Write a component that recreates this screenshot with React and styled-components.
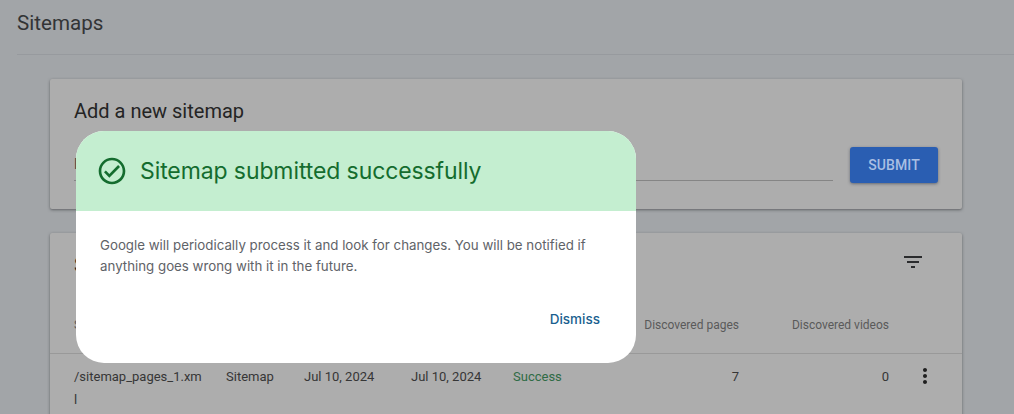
import React from 'react'
import styled, { createGlobalStyle } from 'styled-components'

const Global = createGlobalStyle`
  html, body {
    margin: 0;
    padding: 0;
    background: #a2a5a8;
  }
  * { box-sizing: border-box; }
`

const Page = styled.div`
  position: relative;
  width: 1014px;
  height: 414px;
  overflow: hidden;
  background: #a2a5a8;
  font-family: Roboto, "Liberation Sans", sans-serif;
  color: #2a2b2d;
`

const PageHeader = styled.header`
  height: 55px;
  margin-left: 17px;
  padding-top: 10px;
  border-bottom: 1px solid #979a9e;
  font-size: 20.6px;
  line-height: 26px;
  color: #323436;
`

const Content = styled.main`
  display: flex;
  flex-direction: column;
  gap: 24px;
  width: 912px;
  margin: 24px 0 0 50px;
`

const Card = styled.section`
  background: #adadad;
  border-radius: 2px;
  box-shadow: 0 1px 3px rgba(40, 42, 46, 0.55);
`

const AddCard = styled(Card)`
  height: 130px;
  padding: 20px 24px 0;
`

const CardTitle = styled.h2`
  margin: 0;
  font-size: 20px;
  font-weight: 400;
  line-height: 24px;
  color: #242424;
`

const FormRow = styled.div`
  display: flex;
  align-items: flex-start;
  gap: 17px;
  margin-top: 24px;
`

const FieldLine = styled.div`
  width: 759px;
  height: 34px;
  border-bottom: 1px solid #858585;
  font-size: 14px;
  line-height: 34px;
  color: #444;
`

const SubmitButton = styled.button`
  width: 88px;
  height: 36px;
  border: none;
  border-radius: 3px;
  background: #2a5eb2;
  box-shadow: 0 1px 3px rgba(30, 40, 60, 0.5);
  color: #a9bfe3;
  font: 500 14px Roboto, sans-serif;
  letter-spacing: 0.1px;
`

const TableCard = styled(Card)`
  height: 220px;
`

const TableTop = styled.div`
  display: flex;
  align-items: flex-start;
  justify-content: space-between;
  height: 75px;
  padding: 17px 37px 0 24px;
`

const TableTitle = styled.span`
  font-size: 20px;
  line-height: 30px;
  color: #242424;
`

const Row = styled.div`
  display: grid;
  grid-template-columns: 152px 78px 107px 102px 126px 100px 150px 48px;
  align-items: center;
  padding-left: 24px;
`

const HeadRow = styled(Row)`
  height: 46px;
  padding-bottom: 12px;
  border-bottom: 1px solid #999;
  font-size: 12px;
  color: #5a5a5a;
`

const BodyRow = styled(Row)`
  height: 44px;
  font-size: 13px;
  color: #363636;
`

const Cell = styled.div`
  white-space: nowrap;
  text-align: ${p => (p.$num ? 'right' : 'left')};
  color: ${p => (p.$ok ? '#2f6b45' : 'inherit')};
`

const Extra = styled.div`
  padding-left: 24px;
  margin-top: -6px;
  font-size: 13px;
  color: #363636;
`

const IconCell = styled.div`
  display: flex;
  justify-content: flex-end;
  color: #1f1f1f;
`

const Dialog = styled.div`
  position: absolute;
  left: 76px;
  top: 131px;
  width: 560px;
  height: 232px;
  border-radius: 28px;
  overflow: hidden;
  background: #fff;
`

const DialogHeader = styled.div`
  display: flex;
  align-items: center;
  gap: 12px;
  height: 80px;
  padding-left: 20px;
  background: #c4eed0;
  color: #146c2e;
  font-family: Inter, Roboto, sans-serif;
  font-size: 23px;
  letter-spacing: -0.1px;
`

const DialogText = styled.p`
  margin: 0;
  padding: 24px 24px 0;
  font-family: Inter, Roboto, sans-serif;
  font-size: 13.3px;
  line-height: 21px;
  color: #5f6368;
`

const DialogActions = styled.div`
  display: flex;
  justify-content: flex-end;
  padding: 32px 36px 0;
`

const Dismiss = styled.span`
  font-family: Inter, Roboto, sans-serif;
  font-size: 13.5px;
  font-weight: 500;
  line-height: 20px;
  color: #1a5f8f;
`

const Icon = ({ size, d }) => (
  <svg width={size} height={size} viewBox="0 0 24 24" fill="currentColor">
    <path d={d} />
  </svg>
)

const FILTER = 'M10 18h4v-2h-4v2zM3 6v2h18V6H3zm3 7h12v-2H6v2z'
const MORE = 'M12 8c1.1 0 2-.9 2-2s-.9-2-2-2-2 .9-2 2 .9 2 2 2zm0 2c-1.1 0-2 .9-2 2s.9 2 2 2 2-.9 2-2-.9-2-2-2zm0 6c-1.1 0-2 .9-2 2s.9 2 2 2 2-.9 2-2-.9-2-2-2z'
const CHECK = 'M12 2C6.48 2 2 6.48 2 12s4.48 10 10 10 10-4.48 10-10S17.52 2 12 2zm0 18c-4.41 0-8-3.59-8-8s3.59-8 8-8 8 3.59 8 8-3.59 8-8 8zm4.59-12.42L10 14.17l-2.59-2.58L6 13l4 4 8-8z'

export default function App() {
  return (
    <Page>
      <Global />
      <PageHeader>Sitemaps</PageHeader>
      <Content>
        <AddCard>
          <CardTitle>Add a new sitemap</CardTitle>
          <FormRow>
            <FieldLine>Enter sitemap URL</FieldLine>
            <SubmitButton>SUBMIT</SubmitButton>
          </FormRow>
        </AddCard>
        <TableCard>
          <TableTop>
            <TableTitle>Submitted sitemaps</TableTitle>
            <Icon size={24} d={FILTER} />
          </TableTop>
          <HeadRow>
            <Cell>Sitemap</Cell>
            <Cell>Type</Cell>
            <Cell>Submitted</Cell>
            <Cell>Last read</Cell>
            <Cell>Status</Cell>
            <Cell $num>Discovered pages</Cell>
            <Cell $num>Discovered videos</Cell>
            <div />
          </HeadRow>
          <BodyRow>
            <Cell>/sitemap_pages_1.xm</Cell>
            <Cell>Sitemap</Cell>
            <Cell>Jul 10, 2024</Cell>
            <Cell>Jul 10, 2024</Cell>
            <Cell $ok>Success</Cell>
            <Cell $num>7</Cell>
            <Cell $num>0</Cell>
            <IconCell><Icon size={24} d={MORE} /></IconCell>
          </BodyRow>
          <Extra>l</Extra>
        </TableCard>
      </Content>
      <Dialog>
        <DialogHeader>
          <Icon size={32} d={CHECK} />
          Sitemap submitted successfully
        </DialogHeader>
        <DialogText>
          Google will periodically process it and look for changes. You will be notified if anything goes wrong with it in the future.
        </DialogText>
        <DialogActions>
          <Dismiss>Dismiss</Dismiss>
        </DialogActions>
      </Dialog>
    </Page>
  )
}
